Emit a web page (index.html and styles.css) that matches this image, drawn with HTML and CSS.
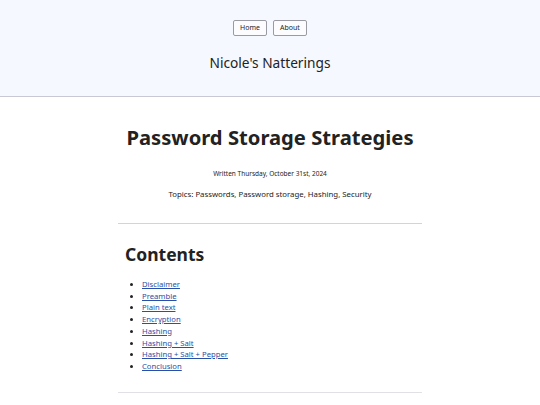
FILE: index.html
```html
<!DOCTYPE html>
<html>
<head>
<meta charset="utf-8">
<link rel="stylesheet" href="styles.css">
</head>
<body>
<header class="site-header">
  <nav class="nav">
    <a class="nav-btn" href="#">Home</a>
    <a class="nav-btn" href="#">About</a>
  </nav>
  <div class="site-title">Nicole's Natterings</div>
</header>
<main class="content">
  <h1 class="post-title">Password Storage Strategies</h1>
  <p class="post-date">Written Thursday, October 31st, 2024</p>
  <p class="post-topics">Topics: Passwords, Password storage, Hashing, Security</p>
  <hr class="rule">
  <section class="toc">
    <h2 class="toc-title">Contents</h2>
    <ul class="toc-list">
      <li><a href="#">Disclaimer</a></li>
      <li><a href="#">Preamble</a></li>
      <li><a href="#">Plain text</a></li>
      <li><a href="#">Encryption</a></li>
      <li><a href="#">Hashing</a></li>
      <li><a href="#">Hashing + Salt</a></li>
      <li><a href="#">Hashing + Salt + Pepper</a></li>
      <li><a href="#">Conclusion</a></li>
    </ul>
  </section>
  <hr class="rule rule-end">
</main>
</body>
</html>
```

FILE: styles.css
```css
html, body {
  margin: 0;
  padding: 0;
  background: #ffffff;
  font-family: "Noto Sans", "DejaVu Sans", sans-serif;
  color: #222222;
}

.site-header {
  background: #f5f8ff;
  border-bottom: 1px solid #c8c8d4;
  height: 97px;
  box-sizing: border-box;
  padding-top: 20px;
  display: flex;
  flex-direction: column;
  align-items: center;
}

.nav {
  display: flex;
  gap: 6px;
}

.nav-btn {
  display: block;
  font-size: 7px;
  line-height: 14px;
  padding: 0 6px;
  border: 1px solid #9a9aa2;
  border-radius: 2px;
  background: #fcfcff;
  color: #222;
  text-decoration: none;
}

.site-title {
  margin-top: 17px;
  font-size: 13.7px;
  line-height: 20px;
  color: #222;
}

.content {
  width: 304px;
  margin: 0 auto;
}

.post-title {
  margin: 26px 0 0;
  text-align: center;
  font-size: 20.2px;
  line-height: 28px;
  font-weight: 700;
  color: #222;
  white-space: nowrap;
}

.post-date {
  margin: 18px 0 0;
  text-align: center;
  font-size: 6.5px;
  line-height: 10px;
}

.post-topics {
  margin: 9px 0 0;
  text-align: center;
  font-size: 7.8px;
  line-height: 12px;
}

.rule {
  margin: 23px 0 0;
  border: 0;
  border-top: 1px solid #d4d4d8;
  height: 0;
}

.toc {
  padding: 0 7px;
}

.toc-title {
  margin: 18px 0 0;
  font-size: 17.5px;
  line-height: 24px;
  font-weight: 700;
  color: #222;
}

.toc-list {
  margin: 13px 0 0;
  padding-left: 17px;
  font-size: 7.7px;
  line-height: 11.7px;
}

.toc-list a {
  color: #2a4fa8;
}

.rule-end {
  margin-top: 19px;
  border-top-color: #e0e0e6;
}
```
